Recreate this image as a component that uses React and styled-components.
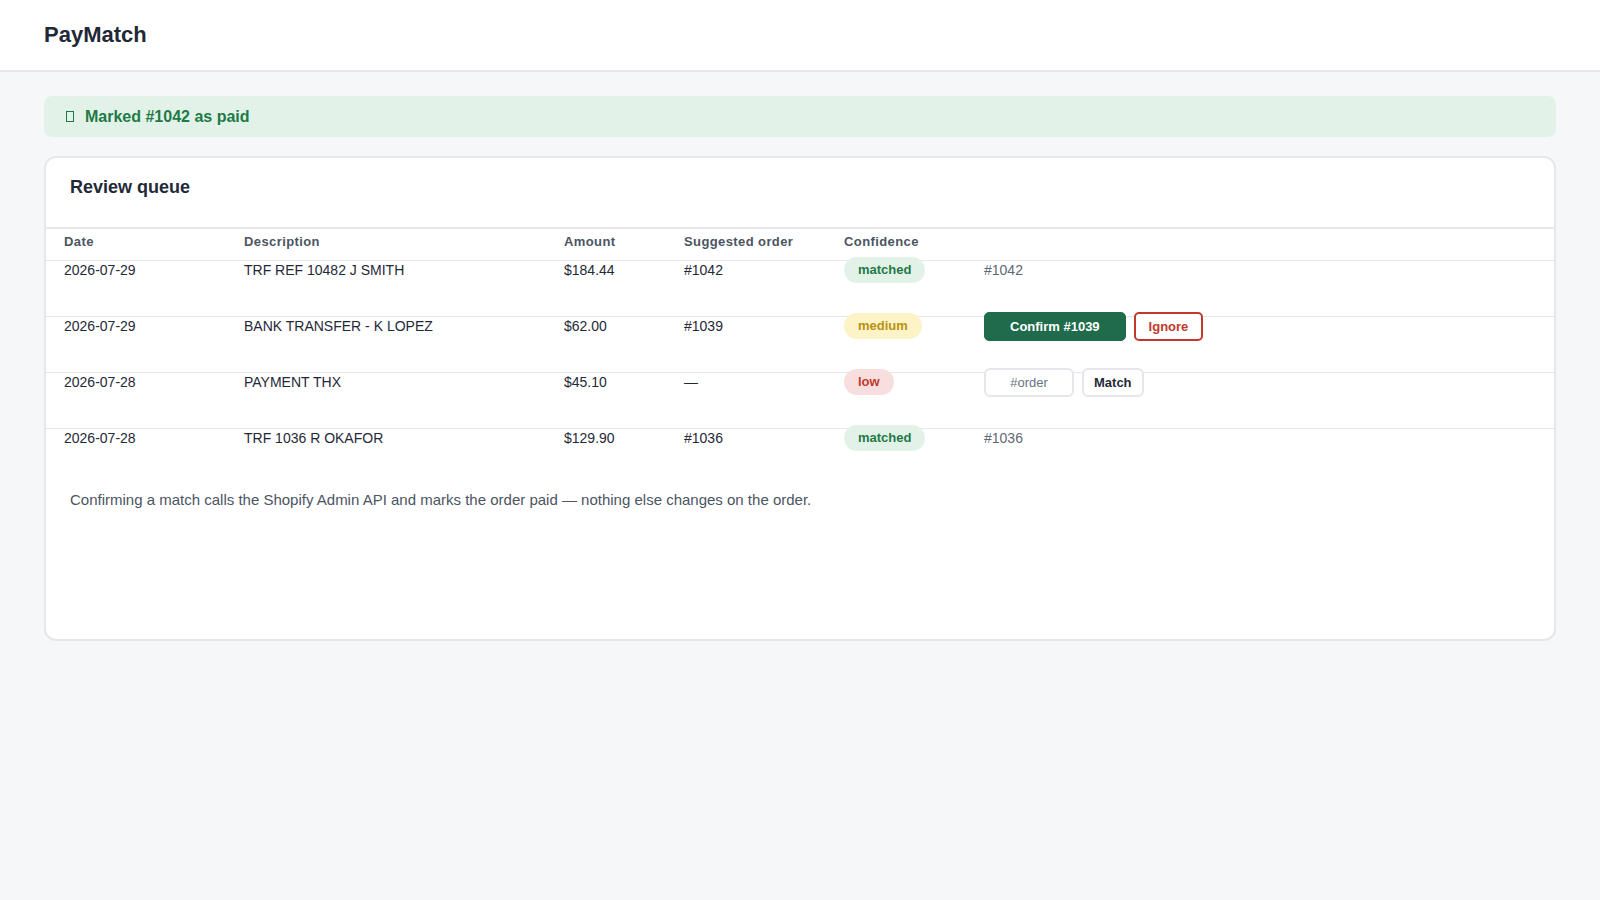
import React from 'react';
import styled, { createGlobalStyle, css } from 'styled-components';

const GlobalStyle = createGlobalStyle`
  html, body {
    margin: 0;
    padding: 0;
    background: #f6f7f9;
    font-family: "Liberation Sans", Arial, sans-serif;
    color: #1f2937;
  }
  * {
    box-sizing: border-box;
  }
`;

const Page = styled.div`
  min-height: 100vh;
  background: #f6f7f9;
`;

const Header = styled.header`
  height: 72px;
  padding: 0 44px;
  display: flex;
  align-items: center;
  background: #fff;
  border-bottom: 2px solid #e5e7eb;
`;

const Brand = styled.h1`
  margin: 0;
  font-size: 22px;
  font-weight: 700;
  color: #1f2937;
`;

const Main = styled.main`
  padding: 24px 44px;
`;

const Banner = styled.div`
  height: 41px;
  padding: 0 21px 0 22px;
  display: flex;
  align-items: center;
  background: #e3f2e8;
  border-radius: 8px;
  color: #1e7a46;
  font-size: 16px;
  font-weight: 700;
  margin-bottom: 19px;
`;

const Tofu = styled.span`
  display: inline-block;
  width: 8px;
  height: 11px;
  border: 1px solid currentColor;
  margin-right: 11px;
`;

const Card = styled.section`
  min-height: 485px;
  background: #fff;
  border: 2px solid #e5e7eb;
  border-radius: 12px;
`;

const CardTitle = styled.h2`
  margin: 0;
  height: 69px;
  padding: 18px 24px 0;
  font-size: 18px;
  line-height: 22px;
  font-weight: 700;
  color: #1f2937;
`;

const columns = '180px 320px 120px 160px 140px 1fr';

const HeadRow = styled.div`
  display: grid;
  grid-template-columns: ${columns};
  height: 33px;
  padding: 5px 18px 0;
  border-top: 2px solid #e5e7eb;
  font-size: 13px;
  line-height: 16px;
  font-weight: 700;
  letter-spacing: 0.4px;
  color: #4b5563;
`;

const Row = styled.div`
  display: grid;
  grid-template-columns: ${columns};
  grid-template-rows: 18px;
  align-items: center;
  padding: 0 18px 37px;
  border-top: 1px solid #e5e7eb;
  font-size: 14px;
  line-height: 18px;
  color: #1f2937;
`;

const Cell = styled.div`
  display: flex;
  align-items: center;
  height: 18px;
  white-space: nowrap;
`;

const badgeTones = {
  matched: css`
    background: #e3f2e8;
    color: #1e7a46;
  `,
  medium: css`
    background: #fdf3c7;
    color: #b8920e;
  `,
  low: css`
    background: #f8dede;
    color: #c0392b;
  `,
};

const Badge = styled.span`
  display: inline-flex;
  align-items: center;
  height: 26px;
  padding: 0 14px;
  border-radius: 13px;
  font-size: 13px;
  font-weight: 700;
  ${(p) => badgeTones[p.$tone]}
`;

const Actions = styled.div`
  display: flex;
  align-items: center;
  gap: 8px;
  height: 18px;
`;

const OrderRef = styled.span`
  color: #5f6873;
  font-size: 14px;
`;

const buttonKinds = {
  primary: css`
    background: #1f6b4c;
    color: #fff;
    border: 1px solid #1f6b4c;
    padding: 0 25px;
    border-radius: 5px;
  `,
  danger: css`
    background: #fff;
    color: #c0392b;
    border: 2px solid #c0392b;
    padding: 0 13px;
    border-radius: 5px;
  `,
  ghost: css`
    background: #fff;
    color: #1f2937;
    border: 2px solid #e5e7eb;
    padding: 0 10px;
    border-radius: 6px;
  `,
};

const Button = styled.button`
  height: 29px;
  flex-shrink: 0;
  font-family: inherit;
  font-size: 13px;
  font-weight: 700;
  cursor: pointer;
  ${(p) => buttonKinds[p.$kind]}
`;

const OrderInput = styled.input`
  width: 90px;
  height: 29px;
  flex-shrink: 0;
  border: 2px solid #e5e7eb;
  border-radius: 6px;
  font-family: inherit;
  font-size: 13px;
  text-align: center;
  color: #1f2937;
  outline: none;

  &::placeholder {
    color: #6b7280;
  }
`;

const Note = styled.p`
  margin: 6px 0 0;
  padding: 0 24px;
  font-size: 15px;
  line-height: 20px;
  color: #4b5563;
`;

const rows = [
  { date: '2026-07-29', desc: 'TRF REF 10482 J SMITH', amount: '$184.44', order: '#1042', confidence: 'matched' },
  { date: '2026-07-29', desc: 'BANK TRANSFER - K LOPEZ', amount: '$62.00', order: '#1039', confidence: 'medium' },
  { date: '2026-07-28', desc: 'PAYMENT THX', amount: '$45.10', order: null, confidence: 'low' },
  { date: '2026-07-28', desc: 'TRF 1036 R OKAFOR', amount: '$129.90', order: '#1036', confidence: 'matched' },
];

function RowActions({ row }) {
  if (row.confidence === 'matched') {
    return <OrderRef>{row.order}</OrderRef>;
  }
  if (row.confidence === 'medium') {
    return (
      <Actions>
        <Button $kind="primary">Confirm {row.order}</Button>
        <Button $kind="danger">Ignore</Button>
      </Actions>
    );
  }
  return (
    <Actions>
      <OrderInput placeholder="#order" />
      <Button $kind="ghost">Match</Button>
    </Actions>
  );
}

export default function App() {
  return (
    <Page>
      <GlobalStyle />
      <Header>
        <Brand>PayMatch</Brand>
      </Header>
      <Main>
        <Banner>
          <Tofu />
          Marked #1042 as paid
        </Banner>
        <Card>
          <CardTitle>Review queue</CardTitle>
          <HeadRow>
            <div>Date</div>
            <div>Description</div>
            <div>Amount</div>
            <div>Suggested order</div>
            <div>Confidence</div>
            <div />
          </HeadRow>
          {rows.map((row) => (
            <Row key={row.desc}>
              <Cell>{row.date}</Cell>
              <Cell>{row.desc}</Cell>
              <Cell>{row.amount}</Cell>
              <Cell>{row.order || '—'}</Cell>
              <Cell>
                <Badge $tone={row.confidence}>{row.confidence}</Badge>
              </Cell>
              <Cell>
                <RowActions row={row} />
              </Cell>
            </Row>
          ))}
          <Note>
            Confirming a match calls the Shopify Admin API and marks the order paid — nothing else changes on the order.
          </Note>
        </Card>
      </Main>
    </Page>
  );
}
